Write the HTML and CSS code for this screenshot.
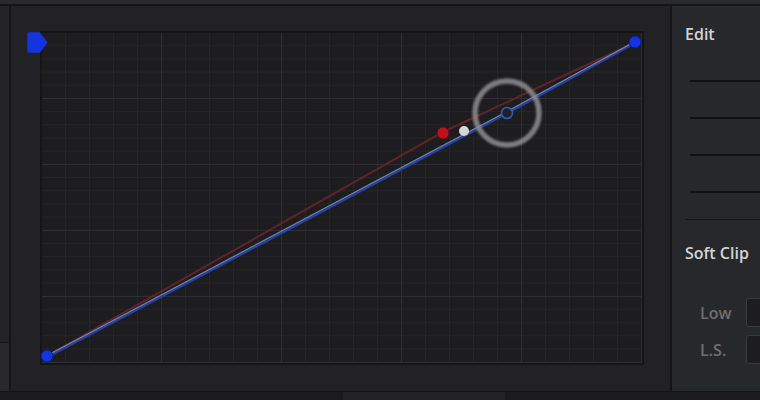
FILE: index.html
```html
<!DOCTYPE html>
<html>
<head>
<meta charset="utf-8">
<link rel="stylesheet" href="styles.css">
</head>
<body>
<div class="app">
  <div class="topbar"></div>
  <div class="middle">
    <div class="side">
      <div class="side-top"></div>
      <div class="side-bottom"></div>
    </div>
    <div class="main">
      <div class="graph"></div>
    </div>
    <div class="panel">
      <div class="title">Edit</div>
      <div class="tracks">
        <div class="track"></div>
        <div class="track"></div>
        <div class="track"></div>
        <div class="track"></div>
        <div class="track wide"></div>
      </div>
      <div class="title soft">Soft Clip</div>
      <div class="fields">
        <div class="field"><span class="label">Low</span><span class="input"></span></div>
        <div class="field"><span class="label">L.S.</span><span class="input"></span></div>
      </div>
    </div>
  </div>
  <div class="bottombar"><div class="seg"></div></div>
  <svg class="curves" viewBox="0 0 760 400" width="760" height="400">
    <defs>
      <filter id="soft" x="-20%" y="-20%" width="140%" height="140%"><feGaussianBlur stdDeviation="1"/></filter>
    </defs>
    <polyline points="47,356 443,132 636,42" fill="none" stroke="#64222a" stroke-width="2"/>
    <polyline points="47,357 507,113 636,42" fill="none" stroke="#2840a0" stroke-width="3"/>
    <polyline points="47,355.5 507,111.5 636,41" fill="none" stroke="#8fa3b4" stroke-width="1.1" opacity="0.75"/>
    <circle cx="507" cy="113" r="32" fill="none" stroke="#8e8e90" stroke-width="5.5" opacity="0.85" filter="url(#soft)"/>
    <circle cx="507" cy="113" r="5.5" fill="#1f1f24" stroke="#2f5db6" stroke-width="1.6"/>
    <circle cx="443" cy="133" r="6" fill="#c2101c" stroke="#5a0c10" stroke-width="1"/>
    <circle cx="464" cy="131" r="5" fill="#d6d6d6"/>
    <circle cx="47" cy="356" r="6" fill="#1434e0" stroke="#0b1c7a" stroke-width="1"/>
    <circle cx="635" cy="42" r="6" fill="#1434e0" stroke="#0b1c7a" stroke-width="1"/>
    <path d="M29,34 L39,34 L45.5,42.5 L39,51 L29,51 Z" fill="#1434e0" stroke="#1434e0" stroke-width="3.5" stroke-linejoin="round"/>
  </svg>
</div>
</body>
</html>
```
FILE: styles.css
```css
html, body {
  margin: 0;
  padding: 0;
  background: #1b1b1e;
}
.app {
  position: relative;
  width: 760px;
  height: 400px;
  overflow: hidden;
  font-family: "Open Sans", "DejaVu Sans", sans-serif;
  display: flex;
  flex-direction: column;
}
.topbar {
  height: 4px;
  background: #2a2a2e;
  border-bottom: 2px solid #151517;
}
.middle {
  display: flex;
  height: 385px;
}
.side {
  flex: none;
  width: 9px;
  border-right: 2px solid #151517;
  display: flex;
  flex-direction: column;
}
.side-top {
  flex: 1;
  background: #242428;
}
.side-bottom {
  height: 48px;
  border-top: 1px solid #141416;
  background: #29292d;
}
.main {
  flex: none;
  width: 659px;
  background: #222226;
  padding: 25px 0 0 29px;
  box-sizing: border-box;
}
.graph {
  width: 600px;
  height: 330px;
  border: 2px solid #151518;
  background-color: #1d1d20;
  background-image:
    linear-gradient(to right, #2f2f33 1px, transparent 1px),
    linear-gradient(to bottom, #2f2f33 1px, transparent 1px),
    linear-gradient(to right, #252528 1px, transparent 1px),
    linear-gradient(to bottom, #252528 1px, transparent 1px);
  background-size: 120px 100%, 100% 66px, 24px 100%, 100% 13.2px;
  background-position: -1px 0, 0 -1px, -1px 0, 0 -1px;
}
.panel {
  flex: 1;
  min-width: 0;
  overflow: hidden;
  border-left: 2px solid #151517;
  background: #27282b;
  padding: 17px 0 0 13px;
  box-sizing: border-box;
}
.title {
  font-size: 16px;
  line-height: 22px;
  font-weight: 600;
  color: #d4d4d6;
  white-space: nowrap;
}
.tracks {
  margin-top: 35px;
  display: flex;
  flex-direction: column;
  gap: 35px;
}
.track {
  height: 2px;
  margin-left: 5px;
  background: #111113;
}
.track.wide {
  margin-left: 0;
  margin-top: -9px;
  height: 1px;
  background: #151517;
}
.soft {
  margin-top: 22px;
}
.fields {
  margin-top: 34px;
  margin-left: 15px;
  display: flex;
  flex-direction: column;
  gap: 8px;
}
.field {
  display: flex;
  align-items: center;
}
.label {
  flex: none;
  width: 46px;
  font-size: 16px;
  line-height: 22px;
  font-weight: 600;
  color: #6e6e72;
}
.input {
  flex: none;
  width: 20px;
  height: 27px;
  border: 1px solid #3a3a3e;
  border-radius: 3px;
  background: #1d1d20;
}
.bottombar {
  flex: 1;
  border-top: 1px solid #141416;
  background: #1b1b1e;
  padding-left: 343px;
}
.seg {
  width: 162px;
  height: 100%;
  background: #232327;
}
.curves {
  position: absolute;
  left: 0;
  top: 0;
  pointer-events: none;
}
```
